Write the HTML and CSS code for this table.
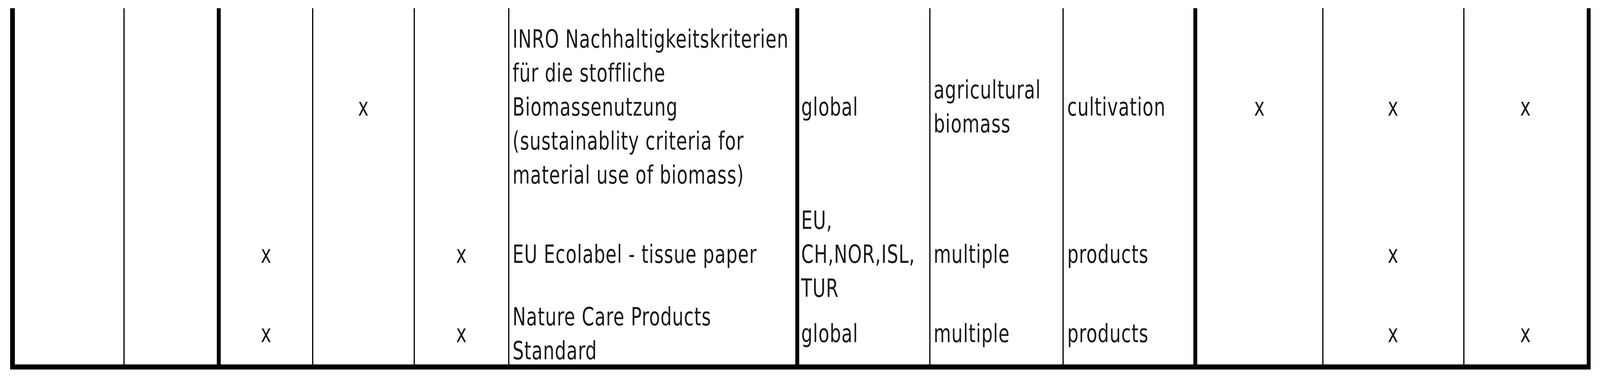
FILE: index.html
```html
<!DOCTYPE html>
<html lang="de">
<head>
<meta charset="utf-8">
<title>Standards</title>
<link rel="stylesheet" href="styles.css">
</head>
<body>
<div class="tbl">
  <!-- row 1 -->
  <div class="c b-thin"></div>
  <div class="c b-thick"></div>
  <div class="c b-thin"></div>
  <div class="c b-thin x"><span class="s">x</span></div>
  <div class="c b-thin"></div>
  <div class="c b-thick t"><span class="s">INRO Nachhaltigkeitskriterien<br>für die stoffliche<br>Biomassenutzung<br>(sustainablity criteria for<br>material use of biomass)</span></div>
  <div class="c b-thin t after-thick"><span class="s">global</span></div>
  <div class="c b-thin t"><span class="s">agricultural<br>biomass</span></div>
  <div class="c b-thick t"><span class="s">cultivation</span></div>
  <div class="c b-thin x"><span class="s">x</span></div>
  <div class="c b-thin x"><span class="s">x</span></div>
  <div class="c b-thick x"><span class="s">x</span></div>
  <!-- row 2 -->
  <div class="c b-thin"></div>
  <div class="c b-thick"></div>
  <div class="c b-thin x"><span class="s">x</span></div>
  <div class="c b-thin"></div>
  <div class="c b-thin x"><span class="s">x</span></div>
  <div class="c b-thick t"><span class="s">EU Ecolabel - tissue paper</span></div>
  <div class="c b-thin t after-thick"><span class="s">EU,<br>CH,NOR,ISL,<br>TUR</span></div>
  <div class="c b-thin t"><span class="s">multiple</span></div>
  <div class="c b-thick t"><span class="s">products</span></div>
  <div class="c b-thin"></div>
  <div class="c b-thin x"><span class="s">x</span></div>
  <div class="c b-thick"></div>
  <!-- row 3 -->
  <div class="c b-thin"></div>
  <div class="c b-thick"></div>
  <div class="c b-thin x"><span class="s">x</span></div>
  <div class="c b-thin"></div>
  <div class="c b-thin x"><span class="s">x</span></div>
  <div class="c b-thick t"><span class="s">Nature Care Products<br>Standard</span></div>
  <div class="c b-thin t after-thick"><span class="s">global</span></div>
  <div class="c b-thin t"><span class="s">multiple</span></div>
  <div class="c b-thick t"><span class="s">products</span></div>
  <div class="c b-thin"></div>
  <div class="c b-thin x"><span class="s">x</span></div>
  <div class="c b-thick x"><span class="s">x</span></div>
</div>
<script src="script.js"></script>
</body>
</html>
```
FILE: styles.css
```css
:root {
  --k: 1;
}

html, body {
  margin: 0;
  padding: 0;
  background: #ffffff;
  overflow: hidden;
}

body {
  font-family: "DejaVu Sans", Verdana, sans-serif;
  font-size: 64px;
  color: #1a1a1a;
}

.tbl {
  margin-top: 21px;
  margin-left: calc(36px * var(--k));
  width: calc(5663px * var(--k));
  box-sizing: border-box;
  border-left: calc(17px * var(--k)) solid #000;
  border-bottom: 13px solid #000;
  display: grid;
  grid-template-columns:
    calc(393px * var(--k)) calc(345px * var(--k)) calc(331px * var(--k))
    calc(365px * var(--k)) calc(338px * var(--k)) calc(1039px * var(--k))
    calc(469px * var(--k)) calc(478px * var(--k)) calc(478px * var(--k))
    calc(452px * var(--k)) calc(506px * var(--k)) calc(452px * var(--k));
  grid-template-rows: 506px 249px 157px;
}

.c {
  box-sizing: border-box;
  display: flex;
  align-items: center;
  min-width: 0;
  overflow: visible;
  line-height: 87px;
  letter-spacing: 1.5px;
  white-space: nowrap;
}

.s {
  display: inline-block;
  transform: scaleX(var(--k));
  transform-origin: left center;
}

.x .s {
  transform-origin: center center;
}

.b-thin {
  border-right: 3px solid #000;
}

.b-thick {
  border-right: calc(14px * var(--k)) solid #000;
}

.t {
  padding-left: calc(12px * var(--k));
}

.t.after-thick {
  padding-left: calc(6px * var(--k));
}

.x {
  justify-content: center;
  color: #1e1e1e;
}
```
FILE: script.js
```js
(function () {
  function apply() {
    var k = window.innerWidth / 5732;
    if (k > 1) { k = 1; }
    document.documentElement.style.setProperty('--k', String(k));
  }
  apply();
  window.addEventListener('resize', apply);
})();
```
